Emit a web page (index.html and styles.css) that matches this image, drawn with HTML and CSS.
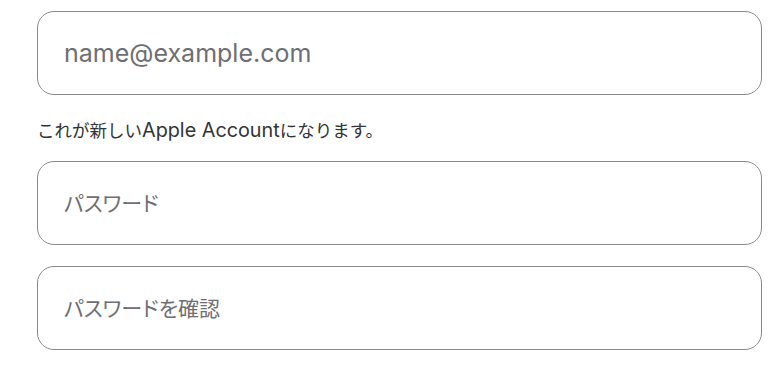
FILE: index.html
```html
<!DOCTYPE html>
<html lang="ja">
<head>
<meta charset="utf-8">
<title>Apple Account</title>
<link rel="stylesheet" href="styles.css">
</head>
<body>
<form class="form">
  <input class="field field-en" type="email" placeholder="name@example.com">
  <p class="hint">これが新しい<span class="latin">Apple Account</span>になります。</p>
  <input class="field field-ja" type="password" placeholder="パスワード">
  <input class="field field-ja field-last" type="password" placeholder="パスワードを確認">
</form>
</body>
</html>
```

FILE: styles.css
```css
html, body {
  margin: 0;
  padding: 0;
  background: #ffffff;
}
body {
  font-family: "Inter", "Noto Sans CJK JP", sans-serif;
  color: #333336;
}
.form {
  display: flex;
  flex-direction: column;
  padding: 11px 0 0 37px;
  width: 725px;
}
.field {
  box-sizing: border-box;
  width: 725px;
  height: 84px;
  margin: 0;
  padding: 0 26px;
  border: 1px solid #8a8a8e;
  border-radius: 17px;
  background: #fff;
  font-family: "Inter", "Noto Sans CJK JP", sans-serif;
  color: #1d1d1f;
  outline: none;
}
.field::placeholder {
  color: #6e6e73;
  opacity: 1;
}
.field-en {
  font-size: 25px;
}
.field-ja {
  font-size: 21px;
  font-feature-settings: "palt";
}
.field-last {
  margin-top: 21px;
}
.hint {
  margin: 22px 0 16px;
  font-size: 17.5px;
  line-height: 28px;
  color: #333336;
}
.latin {
  font-size: 19.8px;
  line-height: 1;
}
```
